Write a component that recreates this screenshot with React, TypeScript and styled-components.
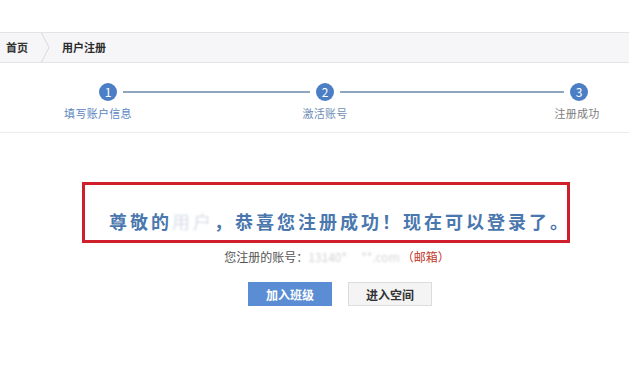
import React from 'react'
import styled, { createGlobalStyle } from 'styled-components'

const GlobalStyle = createGlobalStyle`
  body {
    margin: 0;
    background: #ffffff;
    font-family: "Noto Sans CJK SC", "Noto Sans", sans-serif;
  }
`

const Page = styled.div`
  width: 629px;
  height: 380px;
  background: #fff;
  overflow: hidden;
`

const TopSpace = styled.div`
  height: 32px;
`

const Breadcrumb = styled.nav`
  height: 29px;
  display: flex;
  align-items: center;
  background: #f6f6f8;
  border-top: 1px solid #e4e4e6;
  border-bottom: 1px solid #e4e4e6;
  padding-left: 6px;
`

const Crumb = styled.span<{ $current?: boolean }>`
  font-size: 11px;
  font-weight: 600;
  color: ${({ $current }) => ($current ? '#2a2a2a' : '#333')};
  line-height: 29px;
`

const CrumbSep = styled.svg`
  margin: 0 12px 0 13px;
  display: block;
`

const StepsSection = styled.section`
  height: 49px;
  padding-top: 20px;
  border-bottom: 1px solid #ececec;
`

const StepsRow = styled.div`
  display: flex;
  align-items: flex-start;
  padding-left: 99px;
`

const Step = styled.div`
  width: 18px;
  display: flex;
  flex-direction: column;
  align-items: center;
`

const Circle = styled.div`
  width: 18px;
  height: 18px;
  border-radius: 50%;
  background: #4b7ec4;
  color: #fff;
  font-size: 12px;
  line-height: 18px;
  text-align: center;
`

const StepLabel = styled.div<{ $color: string; $shift?: number }>`
  margin-top: 4px;
  white-space: nowrap;
  font-size: 11px;
  letter-spacing: 0.3px;
  line-height: 16px;
  color: ${({ $color }) => $color};
  transform: translateX(${({ $shift }) => $shift || 0}px);
`

const StepLine = styled.div<{ $width: number }>`
  width: ${({ $width }) => $width}px;
  height: 2px;
  margin: 8px 6px 0;
  background: #8ea6bf;
`

const Content = styled.main`
  display: flex;
  flex-direction: column;
  align-items: center;
  padding-left: 51px;
`

const NoticeBox = styled.div`
  align-self: flex-start;
  margin: 49px 0 0 31px;
  width: 458px;
  height: 48px;
  border: 3px solid #cf1f2a;
  display: flex;
  align-items: flex-end;
  padding: 0 0 7px 24px;
  box-sizing: content-box;
`

const NoticeText = styled.p`
  margin: 0;
  font-size: 18px;
  font-weight: 700;
  letter-spacing: 3px;
  line-height: 24px;
  color: #4a77ae;
  white-space: nowrap;
`

const Blurred = styled.span<{ $color: string }>`
  display: inline-block;
  color: ${({ $color }) => $color};
  filter: blur(1px);
  font-weight: 400;
`

const AccountLine = styled.div`
  margin-top: 6px;
  margin-right: 6px;
  font-size: 12px;
  line-height: 16px;
  color: #555;
  white-space: nowrap;
`

const Gap = styled.span`
  display: inline-block;
  width: 14px;
`

const MailTag = styled.span`
  color: #c0392b;
  margin-left: 2px;
`

const Buttons = styled.div`
  display: flex;
  gap: 16px;
  margin-top: 17px;
`

const Button = styled.button<{ $primary?: boolean }>`
  width: 84px;
  height: 24px;
  padding: 0;
  font-family: inherit;
  font-size: 12px;
  font-weight: 700;
  cursor: pointer;
  border: 1px solid ${({ $primary }) => ($primary ? '#5a8dd3' : '#dcdcdc')};
  background: ${({ $primary }) => ($primary ? '#5a8dd3' : '#f4f4f4')};
  color: ${({ $primary }) => ($primary ? '#fff' : '#333')};
`

const steps = [
  { num: 1, label: '填写账户信息', color: '#5a86c0', shift: -10 },
  { num: 2, label: '激活账号', color: '#6f8db5', shift: 0 },
  { num: 3, label: '注册成功', color: '#7c7c7c', shift: -2 },
]
const lineWidths = [187, 224]

const App = () => {
  return (
    <Page>
      <GlobalStyle />
      <TopSpace />
      <Breadcrumb>
        <Crumb>首页</Crumb>
        <CrumbSep width="9" height="29" viewBox="0 0 9 29">
          <polyline points="0.5,0 8,14.5 0.5,29" fill="none" stroke="#d8d8dc" strokeWidth="1" />
        </CrumbSep>
        <Crumb $current>用户注册</Crumb>
      </Breadcrumb>

      <StepsSection>
        <StepsRow>
          {steps.map((step, i) => (
            <React.Fragment key={step.num}>
              <Step>
                <Circle>{step.num}</Circle>
                <StepLabel $color={step.color} $shift={step.shift}>{step.label}</StepLabel>
              </Step>
              {i < lineWidths.length && <StepLine $width={lineWidths[i]} />}
            </React.Fragment>
          ))}
        </StepsRow>
      </StepsSection>

      <Content>
        <NoticeBox>
          <NoticeText>
            尊敬的<Blurred $color="#d6dde6">用户</Blurred>，恭喜您注册成功！现在可以登录了。
          </NoticeText>
        </NoticeBox>
        <AccountLine>
          您注册的账号：<Blurred $color="#d2d2d2">13140*</Blurred>
          <Gap />
          <Blurred $color="#d6d6d6">**.com</Blurred>
          <MailTag>（邮箱）</MailTag>
        </AccountLine>
        <Buttons>
          <Button $primary>加入班级</Button>
          <Button>进入空间</Button>
        </Buttons>
      </Content>
    </Page>
  )
}

export default App
